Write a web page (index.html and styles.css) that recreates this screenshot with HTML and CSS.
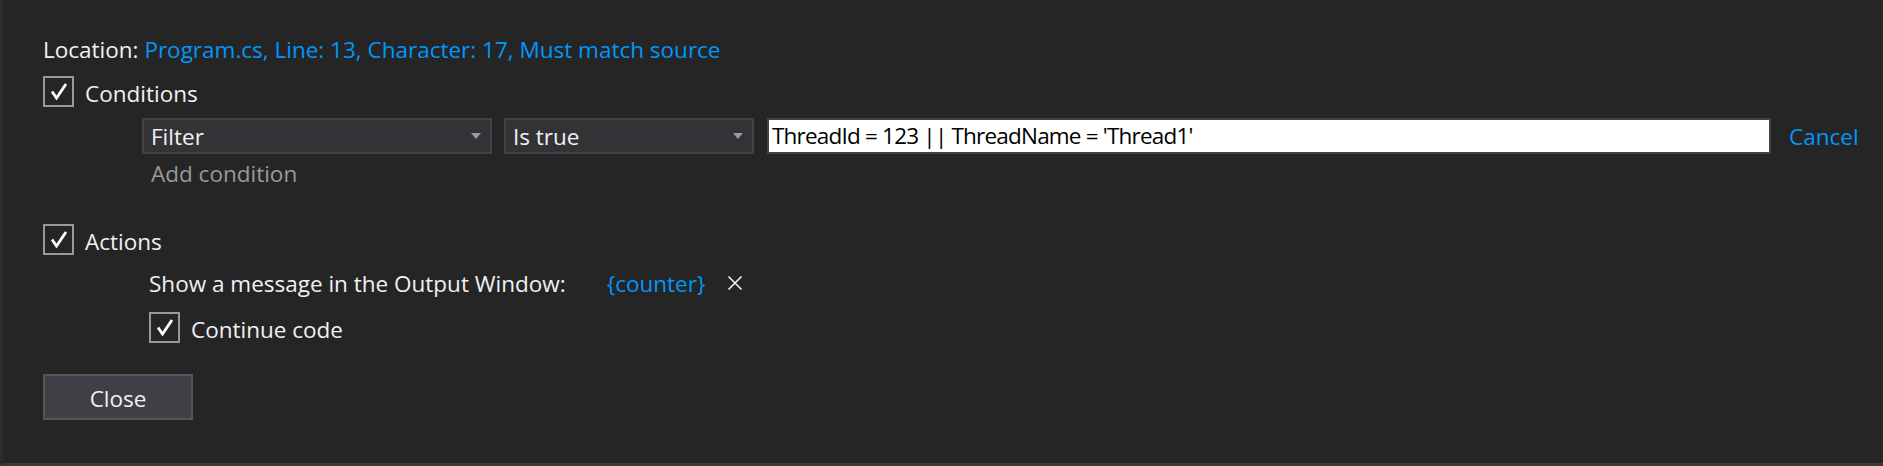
FILE: index.html
```html
<!DOCTYPE html>
<html lang="en">
<head>
<meta charset="utf-8">
<title>Breakpoint Settings</title>
<link rel="stylesheet" href="styles.css">
</head>
<body>
<div class="frame">
  <div class="panel">
    <div class="location">
      <span class="label">Location:</span>
      <span class="link">Program.cs, Line: 13, Character: 17, Must match source</span>
    </div>

    <div class="check-row conditions-row">
      <span class="checkbox"><svg viewBox="0 0 31 31" width="31" height="31"><path d="M9 15.5 L13.5 22 L23 8" fill="none" stroke="#ffffff" stroke-width="2.8" stroke-linecap="butt" stroke-linejoin="miter"/></svg></span>
      <span class="check-label">Conditions</span>
    </div>

    <div class="condition-block">
      <div class="condition-row">
        <div class="dropdown dropdown-type">
          <span class="dropdown-text">Filter</span>
          <span class="arrow"></span>
        </div>
        <div class="dropdown dropdown-op">
          <span class="dropdown-text">Is true</span>
          <span class="arrow"></span>
        </div>
        <div class="text-input">ThreadId = 123 || ThreadName = 'Thread1'</div>
        <span class="link cancel">Cancel</span>
      </div>
      <div class="add-condition">Add condition</div>
    </div>

    <div class="check-row actions-row">
      <span class="checkbox"><svg viewBox="0 0 31 31" width="31" height="31"><path d="M9 15.5 L13.5 22 L23 8" fill="none" stroke="#ffffff" stroke-width="2.8" stroke-linecap="butt" stroke-linejoin="miter"/></svg></span>
      <span class="check-label">Actions</span>
    </div>

    <div class="action-block">
      <div class="message-row">
        <span class="message-label">Show a message in the Output Window:</span>
        <span class="link counter">{counter}</span>
        <span class="remove"><svg viewBox="0 0 16 16" width="16" height="16"><path d="M1.5 1.5 L14.5 14.5 M14.5 1.5 L1.5 14.5" fill="none" stroke="#f1f1f1" stroke-width="1.6"/></svg></span>
      </div>
      <div class="check-row continue-row">
        <span class="checkbox"><svg viewBox="0 0 31 31" width="31" height="31"><path d="M9 15.5 L13.5 22 L23 8" fill="none" stroke="#ffffff" stroke-width="2.8" stroke-linecap="butt" stroke-linejoin="miter"/></svg></span>
        <span class="check-label">Continue code</span>
      </div>
    </div>

    <div class="button-row">
      <div class="button">Close</div>
    </div>
  </div>
</div>
</body>
</html>
```

FILE: styles.css
```css
html, body {
  margin: 0;
  padding: 0;
  background: #252526;
}

body {
  width: 1883px;
  height: 466px;
  overflow: hidden;
  font-family: "Open Sans", "Noto Sans", "Liberation Sans", sans-serif;
  font-size: 22.5px;
  color: #f1f1f1;
}

.frame {
  border-left: 3px solid #2c2c2d;
  border-bottom: 3px solid #3a3a3c;
  box-sizing: border-box;
  height: 466px;
}

.panel {
  display: flex;
  flex-direction: column;
  padding: 34px 0 0 40px;
}

.location {
  height: 32px;
  line-height: 32px;
  white-space: nowrap;
}

.link {
  color: #0097fb;
}

.check-row {
  display: flex;
  align-items: center;
  gap: 11px;
  height: 31px;
}

.conditions-row {
  margin-top: 10px;
}

.checkbox {
  width: 31px;
  height: 31px;
  box-sizing: border-box;
  border: 2px solid #999999;
  display: flex;
  align-items: center;
  justify-content: center;
  flex: none;
}

.checkbox svg {
  display: block;
  margin: -2px;
}

.check-label {
  line-height: 31px;
  padding-top: 3px;
}

.condition-block {
  display: flex;
  flex-direction: column;
  margin-left: 99px;
  margin-top: 11px;
}

.condition-row {
  display: flex;
  align-items: center;
  height: 36px;
}

.dropdown {
  height: 36px;
  box-sizing: border-box;
  border: 2px solid #434346;
  background: #333337;
  display: flex;
  align-items: center;
  justify-content: space-between;
  padding: 0 9px 0 7px;
  flex: none;
}

.dropdown-type {
  width: 350px;
}

.dropdown-op {
  width: 250px;
  margin-left: 12px;
}

.arrow {
  width: 0;
  height: 0;
  border-left: 5px solid transparent;
  border-right: 5px solid transparent;
  border-top: 6px solid #999999;
}

.text-input {
  width: 1004px;
  height: 36px;
  margin-left: 13px;
  box-sizing: border-box;
  border: 2px solid #434346;
  background: #ffffff;
  color: #000000;
  line-height: 32px;
  padding-left: 3px;
  letter-spacing: -0.8px;
  white-space: nowrap;
  flex: none;
}

.cancel {
  margin-left: 18px;
}

.add-condition {
  color: #999999;
  margin-left: 9px;
  margin-top: 4px;
  line-height: 32px;
}

.actions-row {
  margin-top: 34px;
}

.action-block {
  display: flex;
  flex-direction: column;
  margin-left: 106px;
  margin-top: 12px;
}

.message-row {
  display: flex;
  align-items: center;
  height: 32px;
  white-space: nowrap;
}

.counter {
  margin-left: 41px;
}

.remove {
  margin-left: 22px;
  display: flex;
}

.continue-row {
  margin-top: 13px;
}

.button-row {
  display: flex;
  margin-top: 31px;
}

.button {
  width: 150px;
  height: 46px;
  box-sizing: border-box;
  border: 2px solid #555555;
  background: #3f3f46;
  display: flex;
  align-items: center;
  justify-content: center;
  padding-top: 2px;
}
```
